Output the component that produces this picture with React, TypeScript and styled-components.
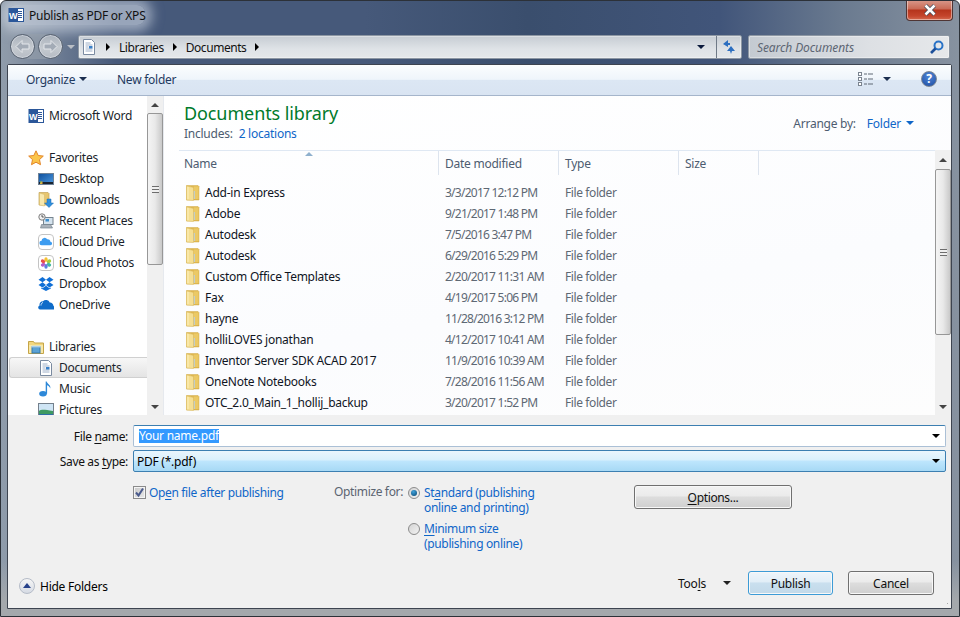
import React from "react";
import styled, { createGlobalStyle } from "styled-components";

const Global = createGlobalStyle`
  html, body { margin: 0; padding: 0; background: #fff; }
  body { font-family: "Noto Sans", "Open Sans", sans-serif; font-size: 12px; letter-spacing: -0.25px; color: #000; }
  * { box-sizing: border-box; }
  u { text-underline-offset: 2px; text-decoration-thickness: 1px; }
`;

const favorites = ["Desktop", "Downloads", "Recent Places", "iCloud Drive", "iCloud Photos", "Dropbox", "OneDrive"];

const files = [
  ["Add-in Express", "3/3/2017 12:12 PM"],
  ["Adobe", "9/21/2017 1:48 PM"],
  ["Autodesk", "7/5/2016 3:47 PM"],
  ["Autodesk", "6/29/2016 5:29 PM"],
  ["Custom Office Templates", "2/20/2017 11:31 AM"],
  ["Fax", "4/19/2017 5:06 PM"],
  ["hayne", "11/28/2016 3:12 PM"],
  ["holliLOVES jonathan", "4/12/2017 10:41 AM"],
  ["Inventor Server SDK ACAD 2017", "11/9/2016 10:39 AM"],
  ["OneNote Notebooks", "7/28/2016 11:56 AM"],
  ["OTC_2.0_Main_1_hollij_backup", "3/20/2017 1:52 PM"],
];

const WordIcon = ({ size = 16 }: { size?: number }) => (
  <svg width={size} height={size} viewBox="0 0 16 16">
    <rect x="6" y="1.5" width="9.5" height="13" fill="#fff" stroke="#2b579a" />
    <path d="M9 4.5h5M9 6.5h5M9 8.5h5M9 10.5h5" stroke="#2b579a" />
    <rect x="0.5" y="1" width="9.5" height="14" fill="#2b579a" />
    <text x="5.2" y="11.5" fontSize="9" fontWeight="700" fill="#fff" textAnchor="middle" fontFamily="Liberation Sans">W</text>
  </svg>
);

const StarIcon = () => (
  <svg width="16" height="16" viewBox="0 0 16 16">
    <path d="M8 .8l2.2 4.7 5.1.6-3.8 3.5 1 5.1L8 12.2l-4.5 2.5 1-5.1L.7 6.1l5.1-.6z" fill="#fbc54a" stroke="#e2852a" />
  </svg>
);

const DesktopIcon = () => (
  <svg width="16" height="16" viewBox="0 0 16 16">
    <defs>
      <linearGradient id="deskSky" x1="0" y1="0" x2="1" y2="1">
        <stop offset="0" stopColor="#0e4f9c" />
        <stop offset="1" stopColor="#4d9ae0" />
      </linearGradient>
    </defs>
    <rect x="0.5" y="2.5" width="15" height="11" fill="url(#deskSky)" stroke="#6f8296" />
    <rect x="1" y="11" width="14" height="2" fill="#1a2430" />
    <rect x="2" y="10.500" width="2.500" height="2.500" fill="#e0b040" />
    <rect x="2" y="10.500" width="1.200" height="1.200" fill="#4fb060" />
  </svg>
);

const DownloadsIcon = () => (
  <svg width="16" height="16" viewBox="0 0 16 16">
    <path d="M1 .5h9l1 1V13H1z" fill="#e7c66e" stroke="#c2a458" strokeWidth=".7" />
    <path d="M1.500 1l5 1.500V14l-5-1z" fill="#f8e8ad" stroke="#d0b263" strokeWidth=".5" />
    <path d="M9 7h4v4h2.500L11 15.500 6.500 11H9z" fill="#2f8fdc" stroke="#1a6bb0" strokeWidth=".5" />
  </svg>
);

const RecentIcon = () => (
  <svg width="16" height="16" viewBox="0 0 16 16">
    <rect x="5.500" y="4.500" width="9.500" height="7" fill="#d5e3ee" stroke="#76848f" />
    <rect x="7.500" y="6" width="3.500" height="2.500" fill="#3d8fce" />
    <path d="M3.500 11.500h9l2 3.500h-12z" fill="#aab2ba" stroke="#76848f" strokeWidth=".7" />
    <circle cx="4" cy="4" r="3.200" fill="#f2f2f2" stroke="#7d7d7d" />
    <path d="M4 2V4h1.800" fill="none" stroke="#333" strokeWidth=".8" />
  </svg>
);

const CloudTile = () => (
  <svg width="16" height="16" viewBox="0 0 16 16">
    <rect x="0.5" y="0.500" width="15" height="15" rx="3.500" fill="#fff" stroke="#c4c4c4" />
    <path d="M3.600 11.200a2.200 2.200 0 0 1 0-4.400 3 3 0 0 1 5.600-1.500 2.600 2.600 0 0 1 3.200 2.500 1.700 1.700 0 0 1 0 3.400z" fill="#3d9cf0" />
  </svg>
);

const PhotosTile = () => (
  <svg width="16" height="16" viewBox="0 0 16 16">
    <rect x="0.5" y="0.500" width="15" height="15" rx="3.500" fill="#fff" stroke="#c4c4c4" />
    <ellipse cx="8" cy="4.600" rx="1.700" ry="2.300" fill="#f6c132" />
    <ellipse cx="11" cy="6.300" rx="1.700" ry="2.300" fill="#a5cb3f" transform="rotate(60 11 6.300)" />
    <ellipse cx="11" cy="9.700" rx="1.700" ry="2.300" fill="#46b8a0" transform="rotate(120 11 9.700)" />
    <ellipse cx="8" cy="11.400" rx="1.700" ry="2.300" fill="#5a7fe0" />
    <ellipse cx="5" cy="9.700" rx="1.700" ry="2.300" fill="#b45cc8" transform="rotate(60 5 9.700)" />
    <ellipse cx="5" cy="6.300" rx="1.700" ry="2.300" fill="#e8504a" transform="rotate(120 5 6.300)" />
  </svg>
);

const DropboxIcon = () => (
  <svg width="16" height="16" viewBox="0 0 16 16" fill="#0f6fd6">
    <path d="M4.500 1L.5 3.700l4 2.600 3.500-2.600zM11.500 1L8 3.700l3.500 2.600 4-2.600zM.5 8.900l4 2.600L8 8.900 4.500 6.300zM11.500 6.300L8 8.900l3.500 2.600 4-2.600zM8 9.700l-3.500 2.600-1.400-.9v1.200L8 15l4.900-2.400v-1.200l-1.400.9z" />
  </svg>
);

const OneDriveIcon = () => (
  <svg width="16" height="16" viewBox="0 0 16 16">
    <path d="M2 12.500a2 2 0 0 1-.4-3.900A3.600 3.600 0 0 1 5 4.200a4 4 0 0 1 6.700 1.300 3.500 3.500 0 0 1 3.800 3.400 2.200 2.200 0 0 1 .5 3.600z" fill="#0f6cc9" />
    <path d="M5 5.500c-1.500.4-2 1.600-2 3" stroke="#fff" fill="none" strokeWidth=".8" />
  </svg>
);

const LibrariesIcon = () => (
  <svg width="16" height="16" viewBox="0 0 16 16">
    <path d="M.5 2.500h5l1 1.500h9v10.500H.5z" fill="#f2d77f" stroke="#c5a548" />
    <path d="M1 6h14v8H1z" fill="#f8e8a8" />
    <rect x="4" y="8" width="8" height="6" fill="#5aa2d6" stroke="#3779aa" />
    <path d="M3 8.500h10L12 6.800H4z" fill="#a9d0ec" />
  </svg>
);

const DocIcon = () => (
  <svg width="16" height="16" viewBox="0 0 16 16">
    <path d="M2.500.5h8l3 3v12h-11z" fill="#fff" stroke="#7a8aa0" />
    <path d="M4.500 4h5M4.500 6h7M4.500 8h3M4.500 10h7M4.500 12h7" stroke="#9fb0c8" />
    <rect x="8" y="7" width="3.500" height="2.500" fill="#3a80c8" />
  </svg>
);

const MusicIcon = () => (
  <svg width="16" height="16" viewBox="0 0 16 16">
    <ellipse cx="5" cy="12.800" rx="3.800" ry="2.700" fill="#2d88d8" />
    <path d="M7.700 12.800V.5h1c.3 2.500 4.300 3 3.600 7-.6-2-2.400-3-3.200-3.200v8.500z" fill="#2d88d8" />
  </svg>
);

const PicturesIcon = () => (
  <svg width="16" height="16" viewBox="0 0 16 16">
    <rect x="0.5" y="1.500" width="15" height="13" fill="#cfe5f5" stroke="#74808c" />
    <path d="M1 9c3-2 6-1 14 0v5H1z" fill="#3f9a62" />
    <path d="M1 12h14v2H1z" fill="#2f6fa8" />
  </svg>
);

const FolderIcon = () => (
  <svg width="16" height="16" viewBox="0 0 16 16">
    <path d="M1.500 .5h11.500l1 1V15H1.500z" fill="#e0b850" stroke="#d3ac48" strokeWidth=".5" />
    <path d="M9 1.500h4.500V14H9z" fill="#ebc965" />
    <path d="M1.500 .8 8.500 2.500V15.500L1.500 15z" fill="#f5df93" stroke="#d9b95f" strokeWidth=".5" />
    <path d="M3 2v12.200" stroke="#fdf0bd" />
    <path d="M9.300 6v8" stroke="#b9cfe0" />
  </svg>
);

const CaretDown = styled.span<{ $color?: string; $size?: number }>`
  display: inline-block;
  flex: none;
  width: 0;
  height: 0;
  border-left: ${(p) => p.$size ?? 4}px solid transparent;
  border-right: ${(p) => p.$size ?? 4}px solid transparent;
  border-top: ${(p) => p.$size ?? 4}px solid ${(p) => p.$color ?? "#1c2f4f"};
`;

const CaretRight = styled.span`
  width: 0;
  height: 0;
  border-top: 4px solid transparent;
  border-bottom: 4px solid transparent;
  border-left: 4px solid #000;
`;

const Frame = styled.div`
  width: 960px;
  height: 617px;
  display: flex;
  flex-direction: column;
  padding: 0 7px 7px 6px;
  overflow: hidden;
  border: 1px solid #2c3138;
  border-radius: 6px 6px 0 0;
  background:
    linear-gradient(180deg, rgba(0, 0, 0, 0) 560px, #a4a8ac 600px),
    linear-gradient(90deg, #8f9cab 0, #8d99a8 8px, #46597a 12%, #46597a 38%, #3a4e6d 55%, #41557a 75%, #6b7b90 88%, #8792a0 100%);
`;

const TitleRow = styled.div`
  height: 29px;
  display: flex;
  align-items: flex-start;
  flex: none;
`;

const TitleBlock = styled.div`
  display: flex;
  align-items: center;
  gap: 5px;
  height: 20px;
  margin-top: 4px;
  margin-left: 1px;
  background: rgba(220, 228, 238, 0.55);
  box-shadow: 0 0 12px 7px rgba(220, 228, 238, 0.55);
  border-radius: 8px;
  color: #111;
`;

const CloseButton = styled.div`
  margin-left: auto;
  margin-top: -1px;
  margin-right: -1px;
  width: 47px;
  height: 21px;
  display: flex;
  align-items: center;
  justify-content: center;
  background: linear-gradient(180deg, #d99a8c 0, #c96a55 45%, #b5341c 50%, #c4452c 80%, #d56b50 100%);
  border: 1px solid #4f3534;
  border-top: none;
  border-radius: 0 0 4px 4px;
  box-shadow: 0 0 0 1px rgba(255, 255, 255, 0.45) inset;
`;

const NavRowBar = styled.div`
  height: 34px;
  flex: none;
  display: flex;
  align-items: flex-start;
  padding-top: 5px;
`;

const RoundGroup = styled.div`
  width: 71px;
  height: 25px;
  margin-top: -1px;
  display: flex;
  align-items: center;
  flex: none;
  padding-left: 3px;
`;

const RoundPill = styled.div`
  display: flex;
  align-items: center;
  gap: 3px;
  height: 25px;
  border-radius: 13px;
  background: rgba(150, 160, 172, 0.6);
`;

const RoundButton = styled.div`
  width: 25px;
  height: 25px;
  border-radius: 50%;
  display: flex;
  align-items: center;
  justify-content: center;
  background: linear-gradient(180deg, #a9b1bb, #c5cad0 55%, #b6bcc4);
  border: 1px solid #566170;
  box-shadow: 0 0 0 1px rgba(225, 230, 236, 0.55) inset;
`;

const HistoryCaret = styled.div`
  margin-left: 4px;
  display: flex;
`;

const AddressBar = styled.div`
  width: 664px;
  height: 24px;
  flex: none;
  display: flex;
  align-items: center;
  gap: 9px;
  padding-left: 2px;
  letter-spacing: -0.45px;
  background: linear-gradient(180deg, #c6ccd3, #dfe3e7 60%, #e4e7ea);
  border: 1px solid #8d97a3;
  border-radius: 2px;
  box-shadow: 0 0 0 1px rgba(255, 255, 255, 0.35) inset;
  color: #111;
`;

const AddressDoc = styled.div`
  display: flex;
`;

const AddressEnd = styled.div`
  margin-left: auto;
  display: flex;
  align-items: center;
  height: 100%;
`;

const RefreshCell = styled.div`
  width: 25px;
  height: 100%;
  margin-left: 11px;
  display: flex;
  align-items: center;
  justify-content: center;
  border-left: 1px solid #6f7a87;
`;

const SearchBar = styled.div`
  width: 202px;
  height: 24px;
  margin-left: 6px;
  flex: none;
  display: flex;
  align-items: center;
  justify-content: space-between;
  padding: 0 4px 0 8px;
  letter-spacing: -0.1px;
  background: linear-gradient(90deg, #c4cad1, #dde0e4 60%, #e6e8ea);
  border: 1px solid #8d97a3;
  border-radius: 2px;
  box-shadow: 0 0 0 1px rgba(255, 255, 255, 0.35) inset;
  font-style: italic;
  color: #5d6673;
`;

const Client = styled.div`
  flex: 1;
  min-height: 0;
  display: flex;
  flex-direction: column;
  background: #f0f0f0;
  border: 1px solid #3d4450;
  border-radius: 2px 2px 0 0;
`;

const Toolbar = styled.div`
  height: 31px;
  flex: none;
  display: flex;
  align-items: center;
  padding: 0 0 2px 18px;
  background: linear-gradient(180deg, #fbfdfe 0, #eff5fb 48%, #dce7f4 50%, #d9e4f2 100%);
  border-bottom: 1px solid #a5b5cb;
  color: #1f3a5f;
`;

const ToolItem = styled.div<{ $w?: number }>`
  display: flex;
  align-items: center;
  gap: 4px;
  width: ${(p) => (p.$w ? `${p.$w}px` : "auto")};
`;

const ToolRight = styled.div`
  margin-left: auto;
  display: flex;
  align-items: center;
  gap: 9px;
  padding-right: 14px;
`;

const HelpBall = styled.div`
  width: 16px;
  height: 16px;
  margin-left: 21px;
  border-radius: 50%;
  display: flex;
  align-items: center;
  justify-content: center;
  background: radial-gradient(circle at 50% 30%, #4f86d8, #1f4da0);
  border: 1px solid #7d8794;
  color: #fff;
  font-size: 12px;
  font-weight: 700;
  line-height: 1;
`;

const Panes = styled.div`
  height: 319px;
  flex: none;
  display: flex;
  background: #fff;
`;

const Sidebar = styled.div`
  width: 156px;
  flex: none;
  display: flex;
  border-right: 1px solid #e6e9ee;
  overflow: hidden;
`;

const NavList = styled.div`
  flex: 1;
  min-width: 0;
  padding-top: 9px;
  overflow: hidden;
`;

const NavItem = styled.div<{ $child?: boolean; $selected?: boolean }>`
  height: 21px;
  display: flex;
  align-items: center;
  gap: 5px;
  padding-left: ${(p) => (p.$child ? "30px" : "20px")};
  color: #1a1f2b;
  white-space: nowrap;
  ${(p) =>
    p.$selected &&
    `
    margin-left: 1px;
    padding-left: 28px;
    background: linear-gradient(180deg, #f7f7f7, #e4e4e4);
    border: 1px solid #d0d0d0;
    border-right: none;
    border-radius: 3px 0 0 3px;
  `}
`;

const NavGap = styled.div`
  height: 21px;
`;

const Scroll = styled.div`
  width: 16px;
  flex: none;
  display: flex;
  flex-direction: column;
  background: #f0f0f0;
`;

const ScrollArrow = styled.div<{ $h: number }>`
  height: ${(p) => p.$h}px;
  flex: none;
  display: flex;
  align-items: center;
  justify-content: center;
`;

const ScrollSpacer = styled.div`
  flex: 1;
`;

const UpTri = styled.span`
  width: 0;
  height: 0;
  border-left: 4px solid transparent;
  border-right: 4px solid transparent;
  border-bottom: 4px solid #444;
`;

const DownTri = styled.span`
  width: 0;
  height: 0;
  border-left: 4px solid transparent;
  border-right: 4px solid transparent;
  border-top: 4px solid #444;
`;

const ScrollThumb = styled.div<{ $h: number }>`
  height: ${(p) => p.$h}px;
  flex: none;
  display: flex;
  align-items: center;
  justify-content: center;
  background: linear-gradient(90deg, #f4f4f4, #e9e9e9 50%, #c9c9c9);
  border: 1px solid #979797;
  border-radius: 2px;
`;

const Grip = styled.div`
  width: 7px;
  height: 7px;
  background: repeating-linear-gradient(180deg, #6d6d6d 0 1px, #efefef 1px 3px);
`;

const MainPane = styled.div`
  flex: 1;
  min-width: 0;
  display: flex;
  flex-direction: column;
  background: linear-gradient(170deg, #fff 0, #fbfcfe 60%, #fdfdfd 100%);
`;

const LibraryHead = styled.div`
  height: 54px;
  flex: none;
  display: flex;
  justify-content: space-between;
  padding: 5px 37px 0 20px;
`;

const LibraryTitle = styled.div`
  font-size: 18px;
  line-height: 24px;
  letter-spacing: -0.1px;
  color: #007a2b;
`;

const Includes = styled.div`
  line-height: 16px;
  margin-top: 1px;
  color: #4d5c70;
  display: flex;
  gap: 6px;
`;

const LinkText = styled.span`
  color: #0f66c8;
`;

const ArrangeBy = styled.div`
  display: flex;
  align-items: center;
  gap: 11px;
  height: 44px;
  color: #4d5c70;
`;

const ArrangeValue = styled.div`
  display: flex;
  align-items: center;
  gap: 5px;
  color: #0f66c8;
`;

const ListArea = styled.div`
  flex: 1;
  min-height: 0;
  display: flex;
`;

const Table = styled.div`
  flex: 1;
  min-width: 0;
  margin-left: 15px;
`;

const HeadRow = styled.div`
  height: 25px;
  position: relative;
  display: grid;
  grid-template-columns: 260px 120px 120px 80px;
  border-top: 1px solid #dfe8f3;
  color: #4d5c70;
`;

const HeadCell = styled.div<{ $first?: boolean }>`
  display: flex;
  align-items: center;
  padding-left: ${(p) => (p.$first ? "5px" : "6px")};
  height: 24px;
  border-right: 1px solid #dde4ee;
`;

const SortMark = styled.span`
  position: absolute;
  left: 126px;
  top: 1px;
  width: 0;
  height: 0;
  border-left: 4px solid transparent;
  border-right: 4px solid transparent;
  border-bottom: 4px solid #8fb0cd;
`;

const Rows = styled.div`
  padding-top: 7px;
`;

const FileRow = styled.div`
  height: 21px;
  display: grid;
  grid-template-columns: 260px 120px 120px;
  align-items: center;
  white-space: nowrap;
`;

const NameCell = styled.div`
  display: flex;
  align-items: center;
  gap: 4px;
  padding-left: 6px;
  color: #10151f;
`;

const MetaCell = styled.div<{ $tight: number }>`
  padding-left: 6px;
  letter-spacing: ${(p) => p.$tight}px;
  color: #5e6874;
`;

const Bottom = styled.div`
  position: relative;
  flex: 1;
  min-height: 0;
  display: flex;
  flex-direction: column;
  padding: 10px 5px 0 0;
  background: #f0f0f0;
`;

const ResizeGrip = styled.div`
  position: absolute;
  right: 1px;
  bottom: 2px;
  width: 7px;
  height: 7px;
  background: radial-gradient(circle, #a8a8a8 0.8px, transparent 1px) 0 0 / 3px 3px;
  clip-path: polygon(100% 0, 100% 100%, 0 100%);
`;

const FormGrid = styled.div`
  display: grid;
  grid-template-columns: 120px 1fr;
  column-gap: 5px;
  row-gap: 3px;
`;

const FormLabel = styled.label`
  display: flex;
  align-items: center;
  justify-content: flex-end;
  letter-spacing: -0.35px;
  color: #111;
`;

const ComboField = styled.div<{ $active?: boolean }>`
  height: 22px;
  display: flex;
  align-items: center;
  justify-content: space-between;
  padding: 0 5px 0 ${(p) => (p.$active ? "3px" : "5px")};
  border: 1px solid ${(p) => (p.$active ? "#3c7fb1" : "#abc0d6")};
  border-top-color: #3c7fb1;
  border-radius: 2px;
  background: ${(p) => (p.$active ? "linear-gradient(180deg, #eaf6fd 0, #d9f0fc 45%, #bee6fd 50%, #a7d9f5 100%)" : "#fff")};
`;

const Selected = styled.span`
  background: #3399ff;
  color: #fff;
  line-height: 14px;
`;

const OptionsRow = styled.div`
  display: flex;
  align-items: flex-start;
  margin-top: 13px;
  padding-left: 125px;
  letter-spacing: -0.35px;
`;

const CheckArea = styled.div`
  width: 201px;
  display: flex;
  align-items: center;
  gap: 3px;
  color: #0f66c8;
  height: 14px;
`;

const CheckBox = styled.span`
  width: 13px;
  height: 13px;
  display: flex;
  align-items: center;
  justify-content: center;
  background: linear-gradient(135deg, #c9c9c9, #e8e8e8);
  border: 1px solid #8a8a8a;
  box-shadow: 0 0 0 1px #f4f4f4 inset;
`;

const OptimizeLabel = styled.div`
  width: 74px;
  line-height: 14px;
  color: #5b6470;
  white-space: nowrap;
`;

const RadioGroup = styled.div`
  width: 226px;
  display: flex;
  flex-direction: column;
  gap: 6px;
`;

const RadioRow = styled.div`
  display: flex;
  gap: 4px;
  color: #0f66c8;
  line-height: 15px;
`;

const RadioDot = styled.span<{ $on?: boolean }>`
  width: 12px;
  height: 12px;
  margin-top: 2px;
  flex: none;
  border-radius: 50%;
  border: 1px solid #8b8b8b;
  display: flex;
  align-items: center;
  justify-content: center;
  background: linear-gradient(135deg, #d4d4d4, #f2f2f2);
  &::after {
    content: "";
    display: ${(p) => (p.$on ? "block" : "none")};
    width: 6px;
    height: 6px;
    border-radius: 50%;
    background: radial-gradient(circle at 40% 30%, #3fa2dc, #08456f);
  }
`;

const PushButton = styled.div<{ $w: number; $primary?: boolean; $gap?: number }>`
  width: ${(p) => p.$w}px;
  height: 24px;
  flex: none;
  margin-left: ${(p) => p.$gap ?? 0}px;
  display: flex;
  align-items: center;
  justify-content: center;
  color: #111;
  border: 1px solid ${(p) => (p.$primary ? "#3c9bd6" : "#707070")};
  border-radius: 3px;
  box-shadow: 0 0 0 1px #f8f8f8 inset;
  background: ${(p) =>
    p.$primary
      ? "linear-gradient(180deg, #eef5fa 0, #e1eef7 45%, #c9dfee 50%, #c2d9e9 100%)"
      : "linear-gradient(180deg, #f2f2f2 0, #ebebeb 45%, #dddddd 50%, #cfcfcf 100%)"};
`;

const Footer = styled.div`
  margin-top: auto;
  height: 37px;
  flex: none;
  display: flex;
  align-items: flex-start;
  padding: 0 12px 0 11px;
`;

const HideFolders = styled.div`
  display: flex;
  align-items: center;
  gap: 5px;
  height: 24px;
  margin-top: 3px;
`;

const HideBall = styled.span`
  width: 16px;
  height: 16px;
  border-radius: 50%;
  display: flex;
  align-items: center;
  justify-content: center;
  background: linear-gradient(180deg, #f6f6f6, #d6dbe4);
  border: 1px solid #b5bcc8;
`;

const BlueUp = styled.span`
  width: 0;
  height: 0;
  margin-top: -2px;
  border-left: 4px solid transparent;
  border-right: 4px solid transparent;
  border-bottom: 5px solid #27428a;
`;

const FooterRight = styled.div`
  margin-left: auto;
  display: flex;
  align-items: center;
`;

const ToolsMenu = styled.div`
  display: flex;
  align-items: center;
  gap: 17px;
  margin-right: 17px;
  color: #111;
`;

const favoriteIcons = [<DesktopIcon />, <DownloadsIcon />, <RecentIcon />, <CloudTile />, <PhotosTile />, <DropboxIcon />, <OneDriveIcon />];

const App: React.FC = () => {
  return (
    <>
      <Global />
      <Frame>
        <TitleRow>
          <TitleBlock>
            <WordIcon />
            <span>Publish as PDF or XPS</span>
          </TitleBlock>
          <CloseButton>
            <svg width="14" height="12" viewBox="0 0 14 12">
              <path d="M2.500 1.500l9 9M11.500 1.500l-9 9" stroke="#3c4a5a" strokeWidth="4" />
              <path d="M2.500 1.500l9 9M11.500 1.500l-9 9" stroke="#fff" strokeWidth="2.600" />
            </svg>
          </CloseButton>
        </TitleRow>
        <NavRowBar>
          <RoundGroup>
            <RoundPill>
              <RoundButton>
                <svg width="17" height="15" viewBox="0 0 17 15">
                  <path d="M8 1.500L2 7.500l6 6V10h7V5H8z" fill="#a3abb6" stroke="#e3e6ea" />
                </svg>
              </RoundButton>
              <RoundButton>
                <svg width="17" height="15" viewBox="0 0 17 15">
                  <path d="M9 1.500l6 6-6 6V10H2V5h7z" fill="#a3abb6" stroke="#e3e6ea" />
                </svg>
              </RoundButton>
            </RoundPill>
            <HistoryCaret>
              <CaretDown $color="#b9bec5" />
            </HistoryCaret>
          </RoundGroup>
          <AddressBar>
            <AddressDoc>
              <DocIcon />
            </AddressDoc>
            <CaretRight />
            <span>Libraries</span>
            <CaretRight />
            <span>Documents</span>
            <CaretRight />
            <AddressEnd>
              <CaretDown $color="#0b1a3c" />
              <RefreshCell>
                <svg width="16" height="16" viewBox="0 0 16 16">
                  <path d="M7 1L2 5l5 3V6h2V4H7z" fill="#2d6fc0" />
                  <path d="M10 15l1-3h3l-4-5-4 5h3z" fill="#2d6fc0" />
                </svg>
              </RefreshCell>
            </AddressEnd>
          </AddressBar>
          <SearchBar>
            <span>Search Documents</span>
            <svg width="16" height="16" viewBox="0 0 16 16">
              <circle cx="9.500" cy="6.500" r="4" fill="none" stroke="#2a73c6" strokeWidth="2" />
              <path d="M6.500 9.500L2 14" stroke="#1c4f99" strokeWidth="2.600" />
            </svg>
          </SearchBar>
        </NavRowBar>
        <Client>
          <Toolbar>
            <ToolItem $w={91}>
              Organize <CaretDown />
            </ToolItem>
            <ToolItem>New folder</ToolItem>
            <ToolRight>
              <svg width="16" height="14" viewBox="0 0 16 14">
                <rect x=".5" y=".5" width="3" height="3" fill="#fff" stroke="#7b8490" />
                <rect x=".5" y="5.500" width="3" height="3" fill="#fff" stroke="#7b8490" />
                <rect x=".5" y="10.500" width="3" height="3" fill="#fff" stroke="#7b8490" />
                <path d="M6 2h3M10 2h5M6 7h3M10 7h5M6 12h3M10 12h5" stroke="#5f6874" />
              </svg>
              <CaretDown />
              <HelpBall>?</HelpBall>
            </ToolRight>
          </Toolbar>
          <Panes>
            <Sidebar>
              <NavList>
                <NavItem>
                  <WordIcon /> Microsoft Word
                </NavItem>
                <NavGap />
                <NavItem>
                  <StarIcon /> Favorites
                </NavItem>
                {favorites.map((name, i) => (
                  <NavItem $child key={name}>
                    {favoriteIcons[i]}
                    {name}
                  </NavItem>
                ))}
                <NavGap />
                <NavItem>
                  <LibrariesIcon /> Libraries
                </NavItem>
                <NavItem $child $selected>
                  <DocIcon /> Documents
                </NavItem>
                <NavItem $child>
                  <MusicIcon /> Music
                </NavItem>
                <NavItem $child>
                  <PicturesIcon /> Pictures
                </NavItem>
              </NavList>
              <Scroll>
                <ScrollArrow $h={17}>
                  <UpTri />
                </ScrollArrow>
                <ScrollThumb $h={152}>
                  <Grip />
                </ScrollThumb>
                <ScrollSpacer />
                <ScrollArrow $h={17}>
                  <DownTri />
                </ScrollArrow>
              </Scroll>
            </Sidebar>
            <MainPane>
              <LibraryHead>
                <div>
                  <LibraryTitle>Documents library</LibraryTitle>
                  <Includes>
                    <span>Includes:</span>
                    <LinkText>2 locations</LinkText>
                  </Includes>
                </div>
                <ArrangeBy>
                  <span>Arrange by:</span>
                  <ArrangeValue>
                    Folder <CaretDown $color="#0f66c8" />
                  </ArrangeValue>
                </ArrangeBy>
              </LibraryHead>
              <ListArea>
                <Table>
                  <HeadRow>
                    <SortMark />
                    <HeadCell $first>Name</HeadCell>
                    <HeadCell>Date modified</HeadCell>
                    <HeadCell>Type</HeadCell>
                    <HeadCell>Size</HeadCell>
                  </HeadRow>
                  <Rows>
                    {files.map(([name, date], i) => (
                      <FileRow key={name + i}>
                        <NameCell>
                          <FolderIcon />
                          {name}
                        </NameCell>
                        <MetaCell $tight={-0.75}>{date}</MetaCell>
                        <MetaCell $tight={-0.4}>File folder</MetaCell>
                      </FileRow>
                    ))}
                  </Rows>
                </Table>
                <Scroll>
                  <ScrollArrow $h={19}>
                    <UpTri />
                  </ScrollArrow>
                  <ScrollThumb $h={166}>
                    <Grip />
                  </ScrollThumb>
                  <ScrollSpacer />
                  <ScrollArrow $h={17}>
                    <DownTri />
                  </ScrollArrow>
                </Scroll>
              </ListArea>
            </MainPane>
          </Panes>
          <Bottom>
            <FormGrid>
              <FormLabel>
                <span>
                  File <u>n</u>ame:
                </span>
              </FormLabel>
              <ComboField>
                <Selected>Your name.pdf</Selected>
                <CaretDown $color="#000" />
              </ComboField>
              <FormLabel>
                <span>
                  Save as <u>t</u>ype:
                </span>
              </FormLabel>
              <ComboField $active>
                <span>PDF (*.pdf)</span>
                <CaretDown $color="#000" />
              </ComboField>
            </FormGrid>
            <OptionsRow>
              <CheckArea>
                <CheckBox>
                  <svg width="11" height="11" viewBox="0 0 11 11">
                    <path d="M2 5.500l2.500 3L9 1.500" fill="none" stroke="#4a5a8c" strokeWidth="2" />
                  </svg>
                </CheckBox>
                <span>
                  Op<u>e</u>n file after publishing
                </span>
              </CheckArea>
              <OptimizeLabel>Optimize for:</OptimizeLabel>
              <RadioGroup>
                <RadioRow>
                  <RadioDot $on />
                  <span>
                    St<u>a</u>ndard (publishing
                    <br />
                    online and printing)
                  </span>
                </RadioRow>
                <RadioRow>
                  <RadioDot />
                  <span>
                    <u>M</u>inimum size
                    <br />
                    (publishing online)
                  </span>
                </RadioRow>
              </RadioGroup>
              <PushButton $w={158}>
                <span>
                  <u>O</u>ptions...
                </span>
              </PushButton>
            </OptionsRow>
            <Footer>
              <HideFolders>
                <HideBall>
                  <BlueUp />
                </HideBall>
                Hide Folders
              </HideFolders>
              <FooterRight>
                <ToolsMenu>
                  <span>
                    Too<u>l</u>s
                  </span>
                  <CaretDown $color="#222" />
                </ToolsMenu>
                <PushButton $w={85} $primary>
                  Publish
                </PushButton>
                <PushButton $w={86} $gap={15}>
                  Cancel
                </PushButton>
              </FooterRight>
            </Footer>
            <ResizeGrip />
          </Bottom>
        </Client>
      </Frame>
    </>
  );
};

export default App;
